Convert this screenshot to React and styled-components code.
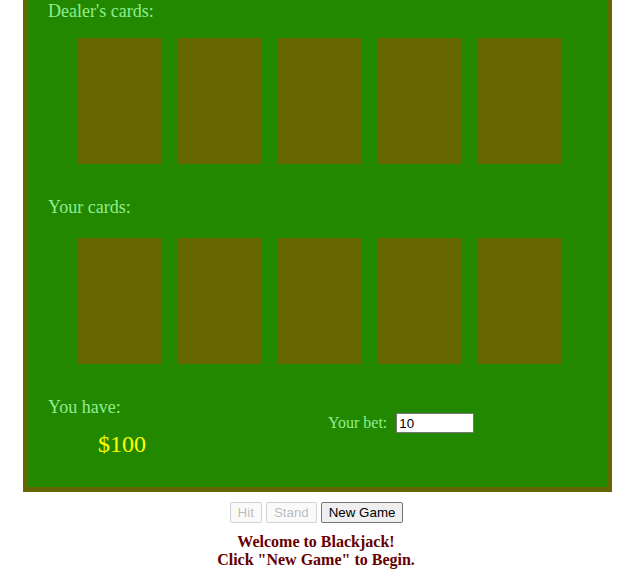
import React from 'react';
import styled, { createGlobalStyle } from 'styled-components';

const GlobalStyle = createGlobalStyle`
  html, body {
    margin: 0;
    padding: 0;
    background: #ffffff;
  }
  body {
    font-family: "Liberation Serif", "Times New Roman", serif;
  }
`;

const Page = styled.div`
  width: 632px;
  display: flex;
  flex-direction: column;
`;

const Table = styled.div`
  margin-left: 23px;
  width: 579px;
  background-color: #228800;
  border: 5px solid #666600;
  border-top: none;
  padding: 1px 0 29px 0;
  display: flex;
  flex-direction: column;
`;

const Section = styled.div`
  display: flex;
  flex-direction: column;
  padding-left: 20px;
  margin-top: ${(props) => props.top || 0}px;
`;

const Label = styled.div`
  color: #90ee90;
  font-size: ${(props) => props.size || 18}px;
  line-height: ${(props) => (props.size ? props.size + 2 : 20)}px;
  white-space: nowrap;
`;

const CardRow = styled.div`
  display: flex;
  gap: 17px;
  margin-left: 30px;
  margin-top: ${(props) => props.top}px;
`;

const Card = styled.div`
  width: 83px;
  height: 126px;
  background-color: #666600;
`;

const BottomRow = styled.div`
  display: flex;
  padding-left: 20px;
  margin-top: 33px;
`;

const MoneyColumn = styled.div`
  width: 280px;
  display: flex;
  flex-direction: column;
`;

const Money = styled.div`
  color: #ffff00;
  font-size: 24px;
  line-height: 27px;
  margin-top: 14px;
  margin-left: 50px;
`;

const BetBox = styled.div`
  display: flex;
  align-items: center;
  gap: 9px;
  margin-top: 16px;
  align-self: flex-start;
`;

const BetInput = styled.input`
  box-sizing: border-box;
  width: 78px;
  height: 20px;
  border: 1px solid #767676;
  padding: 1px 2px;
  font-family: Arial, "Liberation Sans", sans-serif;
  font-size: 13.33px;
  background: #ffffff;
  color: #000000;
  outline: none;
`;

const Controls = styled.div`
  display: flex;
  justify-content: center;
  gap: 4px;
  margin-top: 10px;
  padding-left: 1px;
`;

const Button = styled.button`
  height: 21px;
  padding: 1px 7px;
  border: 1px solid ${(props) => (props.disabled ? 'rgba(118,118,118,0.3)' : '#767676')};
  border-radius: 2px;
  background: ${(props) => (props.disabled ? 'rgba(239,239,239,0.3)' : '#efefef')};
  color: ${(props) => (props.disabled ? 'rgba(16,16,16,0.3)' : '#000000')};
  font-family: Arial, "Liberation Sans", sans-serif;
  font-size: 13.33px;
  line-height: 15px;
`;

const Message = styled.div`
  margin-top: 10px;
  text-align: center;
  color: #660000;
  font-weight: bold;
  font-size: 16px;
  line-height: 18px;
`;

const cards = [0, 1, 2, 3, 4];

export default function App() {
  return (
    <Page>
      <GlobalStyle />
      <Table>
        <Section>
          <Label>Dealer's cards:</Label>
          <CardRow top={17}>
            {cards.map((c) => (
              <Card key={c} />
            ))}
          </CardRow>
        </Section>
        <Section top={33}>
          <Label>Your cards:</Label>
          <CardRow top={21}>
            {cards.map((c) => (
              <Card key={c} />
            ))}
          </CardRow>
        </Section>
        <BottomRow>
          <MoneyColumn>
            <Label>You have:</Label>
            <Money>$100</Money>
          </MoneyColumn>
          <BetBox>
            <Label size={16}>Your bet:</Label>
            <BetInput type="text" defaultValue="10" />
          </BetBox>
        </BottomRow>
      </Table>
      <Controls>
        <Button disabled>Hit</Button>
        <Button disabled>Stand</Button>
        <Button>New Game</Button>
      </Controls>
      <Message>
        Welcome to Blackjack!
        <br />
        Click "New Game" to Begin.
      </Message>
    </Page>
  );
}
